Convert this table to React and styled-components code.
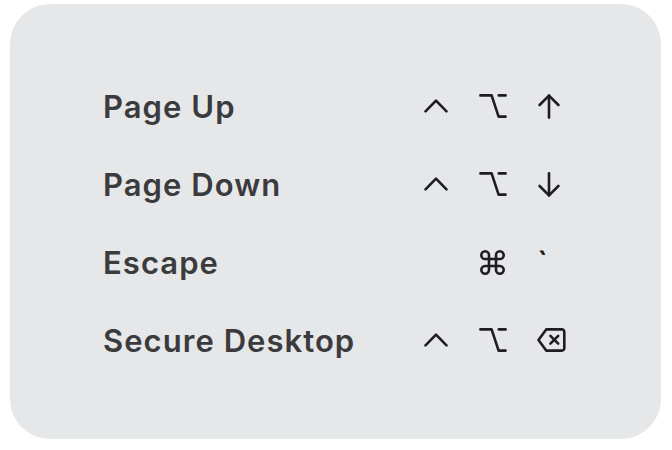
import React from "react";
import styled, { createGlobalStyle } from "styled-components";

const Global = createGlobalStyle`
  html, body { margin: 0; padding: 0; background: #ffffff; }
  body { font-family: Inter, "Noto Sans", sans-serif; }
`;

const Page = styled.div`
  padding: 4px 11px 11px 10px;
`;

const Card = styled.div`
  background: #e6e7e9;
  border-radius: 40px;
  height: 435px;
  box-sizing: border-box;
  padding: 63px 94px 0 93px;
`;

const Grid = styled.div`
  display: grid;
  grid-template-columns: 1fr 55px 58px 30px;
  grid-auto-rows: 78px;
  align-items: center;
`;

const Label = styled.div`
  font-family: Inter, "Noto Sans", sans-serif;
  font-size: 31px;
  font-weight: 560;
  letter-spacing: 1.05px;
  color: #3b3b3d;
  line-height: normal;
  white-space: nowrap;
`;

const Key = styled.div`
  justify-self: start;
  display: flex;
  align-items: center;
  color: #1e1e20;
  margin-left: ${(p) => p.$shift || 0}px;
`;

const Glyph = styled.span`
  font-family: Inter, "Noto Sans", sans-serif;
  font-size: 31px;
  font-weight: 600;
  color: #1e1e20;
  line-height: normal;
`;

const sw = 2.6;

const Caret = () => (
  <svg width="24" height="14" viewBox="0 0 24 14" fill="none" stroke="currentColor" strokeWidth={sw} strokeLinecap="round" strokeLinejoin="round">
    <polyline points="1.5,12.3 12,1.6 22.5,12.3" />
  </svg>
);

const Option = () => (
  <svg width="28" height="24" viewBox="0 0 28 24" fill="none" stroke="currentColor" strokeWidth={sw} strokeLinecap="round" strokeLinejoin="round">
    <path d="M1.4 1.4H12.6L19.6 22.6H26.6" />
    <path d="M19.8 1.4H26.6" />
  </svg>
);

const ArrowUp = () => (
  <svg width="22" height="25" viewBox="0 0 22 25" fill="none" stroke="currentColor" strokeWidth={sw} strokeLinecap="round" strokeLinejoin="round">
    <path d="M11 1.6V23.6" />
    <path d="M1.6 11L11 1.6L20.4 11" />
  </svg>
);

const ArrowDown = () => (
  <svg width="22" height="25" viewBox="0 0 22 25" fill="none" stroke="currentColor" strokeWidth={sw} strokeLinecap="round" strokeLinejoin="round">
    <path d="M11 1.4V23.4" />
    <path d="M1.6 14L11 23.4L20.4 14" />
  </svg>
);

const Command = () => (
  <svg width="25" height="25" viewBox="0 0 25 25" fill="none" stroke="currentColor" strokeWidth={sw} strokeLinecap="round" strokeLinejoin="round">
    <path d="M16 5.15V19.85a3.85 3.85 0 1 0 3.85-3.85H5.15a3.85 3.85 0 1 0 3.85 3.85V5.15a3.85 3.85 0 1 0-3.85 3.850H19.85a3.85 3.85 0 1 0-3.85-3.85" />
  </svg>
);

const Delete = () => (
  <svg width="29" height="24" viewBox="0 0 29 24" fill="none" stroke="currentColor" strokeWidth={sw} strokeLinecap="round" strokeLinejoin="round">
    <path d="M1.5 12L9.2 1.4H24.9a2.4 2.4 0 0 1 2.4 2.4V20.2a2.4 2.4 0 0 1-2.4 2.4H9.2Z" />
    <path d="M13.4 7.9L21.2 15.7M21.2 7.9L13.4 15.7" />
  </svg>
);

const rows = [
  { label: "Page Up", keys: [<Caret />, <Option />, <ArrowUp />], shifts: [0, 0, 1] },
  { label: "Page Down", keys: [<Caret />, <Option />, <ArrowDown />], shifts: [0, 0, 1] },
  { label: "Escape", keys: [null, <Command />, <Glyph>`</Glyph>], shifts: [0, 1, 0] },
  { label: "Secure Desktop", keys: [<Caret />, <Option />, <Delete />], shifts: [0, 0, 0] },
];

export default function App() {
  return (
    <>
      <Global />
      <Page>
        <Card>
          <Grid>
            {rows.map((r) => (
              <React.Fragment key={r.label}>
                <Label>{r.label}</Label>
                {r.keys.map((k, i) => (
                  <Key key={i} $shift={r.shifts[i]}>{k}</Key>
                ))}
              </React.Fragment>
            ))}
          </Grid>
        </Card>
      </Page>
    </>
  );
}
